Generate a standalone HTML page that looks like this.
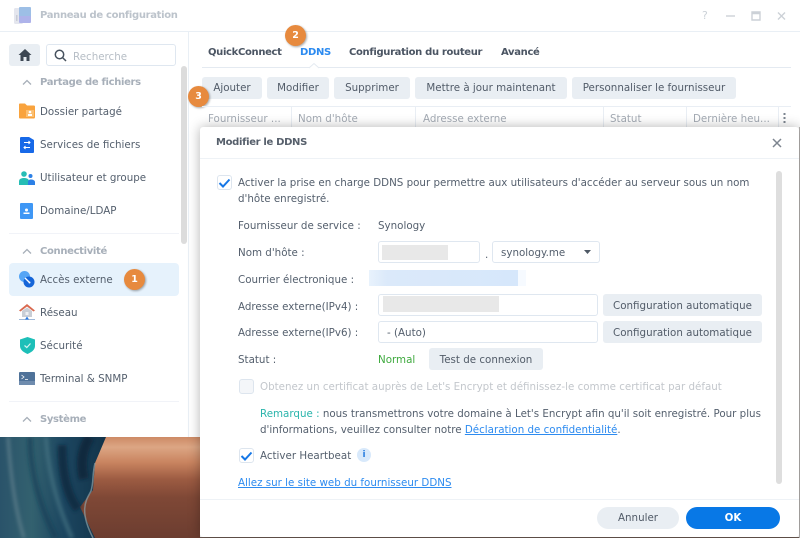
<!DOCTYPE html>
<html lang="fr"><head><meta charset="utf-8"><title>Panneau de configuration</title>
<style>
html,body{margin:0;padding:0}
body{width:800px;height:538px;overflow:hidden;position:relative;background:#fff;font-family:"DejaVu Sans","Liberation Sans",sans-serif;font-size:10.3px;color:#55606e}
.t{position:absolute;white-space:nowrap;line-height:14px;margin-top:1px}
.b{font-weight:bold;font-size:10px;letter-spacing:-.33px}
.box{position:absolute;box-sizing:border-box}
.btn{position:absolute;box-sizing:border-box;height:22px;line-height:23px;background:#e9eef3;border-radius:3px;text-align:center;color:#525c69;white-space:nowrap}
.inp{position:absolute;box-sizing:border-box;height:22px;background:#fff;border:1px solid #dfe7f0;border-radius:3px}
.blur{position:absolute;background:#e8e8e8}
.cb{position:absolute;box-sizing:border-box;width:15px;height:15px;background:#fff;border:1px solid #dde5ee;border-radius:3px}
.badge{position:absolute;width:21px;height:21px;border-radius:50%;background:#e78a3e;color:#fff;font-weight:bold;font-size:9.5px;line-height:21px;text-align:center;box-shadow:1px 1px 2px rgba(0,0,0,.35)}
.m{color:#55606e;left:40px}
.g{color:#a7afb9;font-weight:bold;left:40px;font-size:10px;letter-spacing:-.33px}
a{color:#2d8bf0;text-decoration:underline}
svg{position:absolute;overflow:visible}
</style></head><body>

<!-- wallpaper -->
<svg style="left:0;top:437px;overflow:hidden" width="200" height="101" viewBox="0 0 200 101">
<defs>
<linearGradient id="or" x1="0" y1="0" x2="0" y2="1"><stop offset="0" stop-color="#cd8a66"/><stop offset=".1" stop-color="#dca684"/><stop offset=".25" stop-color="#c98460"/><stop offset=".42" stop-color="#9c5b42"/><stop offset=".6" stop-color="#7f4836"/><stop offset="1" stop-color="#6c3d30"/></linearGradient>
<linearGradient id="bl" x1="0" y1="0" x2="1" y2="0"><stop offset="0" stop-color="#2a536a"/><stop offset=".3" stop-color="#33616f"/><stop offset=".6" stop-color="#1c4660"/><stop offset="1" stop-color="#123349"/></linearGradient>
<filter id="sf"><feGaussianBlur stdDeviation="1.800"/></filter>
</defs>
<rect width="200" height="101" fill="url(#or)"/>
<path d="M0 0H106L95 26 93 53 80 70 95 101H0Z" fill="url(#bl)"/>
<g filter="url(#sf)" fill="none">
<path d="M8 0C10 30 14 70 24 101" stroke="#6d8b95" stroke-width="3" opacity=".65"/>
<path d="M30 0C30 35 40 70 56 101" stroke="#153d55" stroke-width="6" opacity=".6"/>
<path d="M46 0C48 35 58 70 72 101" stroke="#4d7b88" stroke-width="4" opacity=".6"/>
<path d="M62 8C62 38 68 60 78 72" stroke="#0c2840" stroke-width="9" opacity=".85"/>
<path d="M90 0C82 12 80 26 84 42" stroke="#0b2539" stroke-width="10" opacity=".85"/>
</g>
<path d="M95 26C92 38 94 44 91 54 87 62 78 72 93 101" stroke="#8aa0a6" stroke-width="1.500" fill="none" opacity=".7"/>
</svg>

<!-- main window -->
<div class="box" style="left:0;top:0;width:800px;height:437px;background:#fff"></div>
<div class="box" style="left:0;top:31px;width:800px;height:1px;background:#e9eff5"></div>
<div class="box" style="left:188px;top:32px;width:1px;height:405px;background:#e9eff5"></div>

<!-- title bar -->
<svg style="left:13px;top:7px" width="20" height="18" viewBox="0 0 20 18">
<rect x="1" y="1" width="9" height="16" rx="1.500" fill="#e4e6ee"/>
<rect x="6" y="0" width="12" height="13" rx="1" fill="#9dbfe6"/>
<rect x="6" y="9" width="12" height="7" rx="1" fill="#aeb3ea"/>
<rect x="3" y="8" width="1.500" height="6" fill="#c8ccd6"/>
</svg>
<div class="t b" style="left:40px;top:8px;color:#bcc3cb">Panneau de configuration</div>
<div class="t" style="left:702px;top:8px;color:#ccd2d8;font-size:11px">?</div>
<svg style="left:725px;top:10px" width="70" height="12" viewBox="0 0 70 12" fill="none" stroke="#ccd1d7" stroke-width="1.400">
<path d="M1 6H10"/>
<path d="M27 2H35V10H27ZM27 3.500H35" />
<path d="M53 2.500L60 9.500M60 2.500L53 9.500"/>
</svg>

<!-- sidebar -->
<div class="box" style="left:9px;top:44px;width:31px;height:22px;background:#e9eef3;border-radius:3px"></div>
<svg style="left:18px;top:49px" width="14" height="12" viewBox="0 0 14 12"><path d="M7 0L13.500 6H11.500V12H8.500V8H5.500V12H2.500V6H.5Z" fill="#3d4753"/></svg>
<div class="inp" style="left:46px;top:44px;width:130px;height:22px;border-color:#dfe7f0"></div>
<svg style="left:54px;top:49px" width="13" height="13" viewBox="0 0 13 13" fill="none" stroke="#47525e" stroke-width="1.500"><circle cx="5.500" cy="5.500" r="4.200"/><path d="M8.600 8.600L12 12"/></svg>
<div class="t" style="left:73px;top:49px;color:#b7bec6">Recherche</div>

<div class="box" style="left:181px;top:66px;width:6px;height:178px;background:#dcdcdc;border-radius:3px"></div>

<svg style="left:22px;top:79px" width="10" height="6" viewBox="0 0 10 6" fill="none" stroke="#a7afb9" stroke-width="1.300"><path d="M1 5.500L5 1.500 9 5.500"/></svg>
<div class="t g" style="top:75px">Partage de fichiers</div>

<svg style="left:19px;top:103px" width="16" height="16" viewBox="0 0 16 16"><path d="M0 1.500C0 .8.5.5 1 .5H6L8 2.500H15C15.600 2.500 16 3 16 3.500V14C16 15 15.500 15.500 15 15.500H1C.5 15.500 0 15 0 14.500Z" fill="#f9a33d"/><rect x="7" y="7" width="8" height="7" fill="#fbbf72"/><circle cx="11" cy="9" r="1.300" fill="#fff"/><rect x="9" y="11" width="4" height="2" fill="#fff"/></svg>
<div class="t m" style="top:104px">Dossier partagé</div>

<svg style="left:20px;top:137px" width="14" height="16" viewBox="0 0 14 16"><path d="M0 1C0 .5.5 0 1 0H9L14 3V15C14 15.500 13.500 16 13 16H1C.5 16 0 15.500 0 15Z" fill="#1769e8"/><path d="M4 5.500H10M8.500 4L10 5.500 8.500 7M10 10.500H4M5.500 9L4 10.500 5.500 12" stroke="#fff" stroke-width="1" fill="none"/></svg>
<div class="t m" style="top:137px">Services de fichiers</div>

<svg style="left:19px;top:171px" width="16" height="14" viewBox="0 0 16 14"><circle cx="5" cy="3" r="2.800" fill="#26bdb5"/><path d="M0 14V10.500C0 8 2 7 5 7S10 8 10 10.500V14Z" fill="#26bdb5"/><circle cx="11.500" cy="5" r="2" fill="#2c80e6"/><path d="M9 14V11C9 9.500 10 8.500 12 8.500S16 9.500 16 11V14Z" fill="#2c80e6"/></svg>
<div class="t m" style="top:170px">Utilisateur et groupe</div>

<svg style="left:20px;top:203px" width="13" height="16" viewBox="0 0 13 16"><path d="M0 1C0 .5.500 0 1 0H12C12.500 0 13 .5 13 1V15C13 15.500 12.500 16 12 16H1C.5 16 0 15.500 0 15Z" fill="#3f97f5"/><circle cx="6.500" cy="7" r="1.500" fill="#fff"/><rect x="3.500" y="9.500" width="6" height="1.500" fill="#fff"/></svg>
<div class="t m" style="top:203px">Domaine/LDAP</div>

<div class="box" style="left:9px;top:233px;width:170px;height:1px;background:#f1f3f8"></div>
<svg style="left:22px;top:248px" width="10" height="6" viewBox="0 0 10 6" fill="none" stroke="#a7afb9" stroke-width="1.300"><path d="M1 5.500L5 1.500 9 5.500"/></svg>
<div class="t g" style="top:244px">Connectivité</div>

<div class="box" style="left:9px;top:263px;width:170px;height:33px;background:#e6f2fc;border-radius:4px"></div>
<svg style="left:19px;top:271px" width="16" height="17" viewBox="0 0 16 17"><circle cx="5.500" cy="5.500" r="5.500" fill="#55a5f5"/><circle cx="10" cy="11" r="5.500" fill="#1565d8"/><path d="M6 7L10 11" stroke="#fff" stroke-width="1.300"/><circle cx="10.500" cy="11.500" r="1" fill="#fff"/></svg>
<div class="t m" style="top:272px">Accès externe</div>
<div class="badge" style="left:124px;top:269px">1</div>

<svg style="left:19px;top:304px" width="16" height="17" viewBox="0 0 16 17"><path d="M8 0L16 6.500 14.500 7.500 8 2.500 1.500 7.500 0 6.500Z" fill="#d9694f"/><path d="M3 7L8 3.500 13 7V13H3Z" fill="#c9ced6"/><rect x="6.500" y="8" width="3" height="3" fill="#eef0f4"/><path d="M0 15.500H16" stroke="#9fb9d9" stroke-width="1"/><path d="M8 12.500L10 15.500H6Z" fill="#2b78e0"/></svg>
<div class="t m" style="top:305px">Réseau</div>

<svg style="left:20px;top:337px" width="15" height="17" viewBox="0 0 15 17"><path d="M7.500 0L15 2.500V9C15 13 11 15.500 7.500 17 4 15.500 0 13 0 9V2.500Z" fill="#1dbfb8"/><path d="M4.500 8.500L6.800 10.500 10.500 6.500" stroke="#d5f3f0" stroke-width="1.200" fill="none"/></svg>
<div class="t m" style="top:338px">Sécurité</div>

<svg style="left:19px;top:372px" width="16" height="13" viewBox="0 0 16 13"><rect width="16" height="13" rx="1" fill="#4f7299"/><rect y="9" width="16" height="4" fill="#6f8cae"/><path d="M2.500 3L5 5 2.500 7M6 7.500H9" stroke="#fff" stroke-width=".8" fill="none"/></svg>
<div class="t m" style="top:371px">Terminal &amp; SNMP</div>

<div class="box" style="left:9px;top:401px;width:170px;height:1px;background:#f1f3f8"></div>
<svg style="left:22px;top:416px" width="10" height="6" viewBox="0 0 10 6" fill="none" stroke="#a7afb9" stroke-width="1.300"><path d="M1 5.500L5 1.500 9 5.500"/></svg>
<div class="t g" style="top:412px">Système</div>

<!-- tabs -->
<div class="t b" style="left:208px;top:45px;color:#4b5563">QuickConnect</div>
<div class="t b" style="left:300px;top:45px;color:#2b8af0">DDNS</div>
<div class="t b" style="left:349px;top:45px;color:#4b5563">Configuration du routeur</div>
<div class="t b" style="left:501px;top:45px;color:#4b5563">Avancé</div>
<div class="box" style="left:202px;top:67px;width:589px;height:1px;background:#e4eaf1"></div>
<svg style="left:309px;top:63px" width="12" height="5" viewBox="0 0 12 5"><path d="M0 5L5 .5 10 5" fill="#fff" stroke="#e4eaf1"/></svg>
<div class="badge" style="left:285px;top:25px">2</div>

<!-- toolbar -->
<div class="btn" style="left:202px;top:77px;width:60px">Ajouter</div>
<div class="btn" style="left:267px;top:77px;width:62px">Modifier</div>
<div class="btn" style="left:334px;top:77px;width:76px">Supprimer</div>
<div class="btn" style="left:415px;top:77px;width:152px">Mettre à jour maintenant</div>
<div class="btn" style="left:572px;top:77px;width:164px">Personnaliser le fournisseur</div>
<div class="badge" style="left:188px;top:86px">3</div>

<!-- grid header -->
<div class="box" style="left:202px;top:106px;width:589px;height:1px;background:#e9eef4"></div>
<div class="t" style="left:208px;top:111px;color:#a4abb4">Fournisseur ...</div>
<div class="t" style="left:298px;top:111px;color:#a4abb4">Nom d'hôte</div>
<div class="t" style="left:423px;top:111px;color:#a4abb4">Adresse externe</div>
<div class="t" style="left:610px;top:111px;color:#a4abb4">Statut</div>
<div class="t" style="left:693px;top:111px;color:#a4abb4">Dernière heu...</div>
<div class="box" style="left:291px;top:107px;width:1px;height:20px;background:#e9eef4"></div>
<div class="box" style="left:415px;top:107px;width:1px;height:20px;background:#e9eef4"></div>
<div class="box" style="left:603px;top:107px;width:1px;height:20px;background:#e9eef4"></div>
<div class="box" style="left:686px;top:107px;width:1px;height:20px;background:#e9eef4"></div>
<div class="box" style="left:778px;top:107px;width:1px;height:20px;background:#e9eef4"></div>
<svg style="left:783px;top:113px" width="3" height="11" viewBox="0 0 3 11" fill="#7c8590"><rect x=".5" width="2" height="2"/><rect x=".5" y="4" width="2" height="2"/><rect x=".5" y="8" width="2" height="2"/></svg>

<!-- modal -->
<div class="box" style="left:200px;top:537px;width:600px;height:1px;background:#6b5a52"></div>
<div class="box" style="left:799px;top:127px;width:1px;height:411px;background:#b9b6b4"></div>
<div class="box" style="left:200px;top:127px;width:599px;height:410px;background:#fff;border-radius:3px;box-shadow:0 0 12px rgba(0,0,0,.3)"></div>
<div class="t b" style="left:216px;top:135px;color:#565f6b">Modifier le DDNS</div>
<svg style="left:772px;top:138px" width="10" height="10" viewBox="0 0 10 10" fill="none" stroke="#7d858f" stroke-width="1.500"><path d="M1 1L9 9M9 1L1 9"/></svg>
<div class="box" style="left:200px;top:158px;width:599px;height:1px;background:#eef2f6"></div>
<div class="box" style="left:776px;top:171px;width:6px;height:313px;background:#dedede;border-radius:3px"></div>

<div class="cb" style="left:217px;top:175px"></div>
<svg style="left:218px;top:178px" width="13" height="10" viewBox="0 0 13 10" fill="none" stroke="#1677e6" stroke-width="2"><path d="M1.500 5L5 8.500 11.500 1.500"/></svg>
<div class="t" style="left:238px;top:175px">Activer la prise en charge DDNS pour permettre aux utilisateurs d'accéder au serveur sous un nom</div>
<div class="t" style="left:238px;top:191px">d'hôte enregistré.</div>

<div class="t" style="left:238px;top:218px">Fournisseur de service :</div>
<div class="t" style="left:378px;top:218px">Synology</div>

<div class="t" style="left:238px;top:245px">Nom d'hôte :</div>
<div class="inp" style="left:378px;top:241px;width:102px"></div>
<div class="blur" style="left:382px;top:245px;width:66px;height:15px"></div>
<div class="t" style="left:485px;top:247px">.</div>
<div class="inp" style="left:492px;top:241px;width:108px"></div>
<div class="t" style="left:501px;top:245px">synology.me</div>
<svg style="left:584px;top:250px" width="8" height="4" viewBox="0 0 8 4"><path d="M0 0H7L3.500 4Z" fill="#4f5965"/></svg>

<div class="t" style="left:238px;top:272px">Courrier électronique :</div>
<div class="box" style="left:369px;top:270px;width:149px;height:16px;background:linear-gradient(90deg,#e8f2fc 0,#dbe9fa 12%,#d6e7fb 100%)"></div>
<div class="box" style="left:518px;top:270px;width:8px;height:16px;background:#f6faff"></div>

<div class="t" style="left:238px;top:299px">Adresse externe(IPv4) :</div>
<div class="inp" style="left:378px;top:294px;width:220px"></div>
<div class="blur" style="left:383px;top:296px;width:116px;height:16px"></div>
<div class="btn" style="left:603px;top:294px;width:159px;line-height:25px">Configuration automatique</div>

<div class="t" style="left:238px;top:325px">Adresse externe(IPv6) :</div>
<div class="inp" style="left:378px;top:321px;width:220px"></div>
<div class="t" style="left:387px;top:325px">- (Auto)</div>
<div class="btn" style="left:603px;top:321px;width:159px;line-height:24px">Configuration automatique</div>

<div class="t" style="left:238px;top:352px">Statut :</div>
<div class="t" style="left:378px;top:352px;color:#3faa3f">Normal</div>
<div class="btn" style="left:429px;top:348px;width:114px;line-height:24px">Test de connexion</div>

<div class="cb" style="left:239px;top:379px;background:#f4f6f9"></div>
<div class="t" style="left:260px;top:379px;color:#c3c7cc">Obtenez un certificat auprès de Let's Encrypt et définissez-le comme certificat par défaut</div>

<div class="t" style="left:260px;top:406px"><span style="color:#2bb5ac">Remarque :</span> nous transmettrons votre domaine à Let's Encrypt afin qu'il soit enregistré. Pour plus</div>
<div class="t" style="left:260px;top:422px">d'informations, veuillez consulter notre <a>Déclaration de confidentialité</a>.</div>

<div class="cb" style="left:239px;top:448px"></div>
<svg style="left:240px;top:451px" width="13" height="10" viewBox="0 0 13 10" fill="none" stroke="#1677e6" stroke-width="2"><path d="M1.500 5L5 8.500 11.500 1.500"/></svg>
<div class="t" style="left:260px;top:448px">Activer Heartbeat</div>
<div class="box" style="left:357px;top:448px;width:14px;height:14px;border-radius:50%;background:#d8e9fb"></div>
<div class="t" style="left:357px;top:447px;width:14px;text-align:center;color:#2b7fe0;font-size:9px;font-weight:bold">i</div>

<div class="t" style="left:238px;top:475px"><a>Allez sur le site web du fournisseur DDNS</a></div>

<div class="box" style="left:200px;top:499px;width:599px;height:1px;background:#eef2f6"></div>
<div class="btn" style="left:597px;top:507px;width:82px;border-radius:11px">Annuler</div>
<div class="btn" style="left:686px;top:507px;width:94px;border-radius:11px;background:#0878e6;color:#fff;font-weight:bold">OK</div>

</body></html>
